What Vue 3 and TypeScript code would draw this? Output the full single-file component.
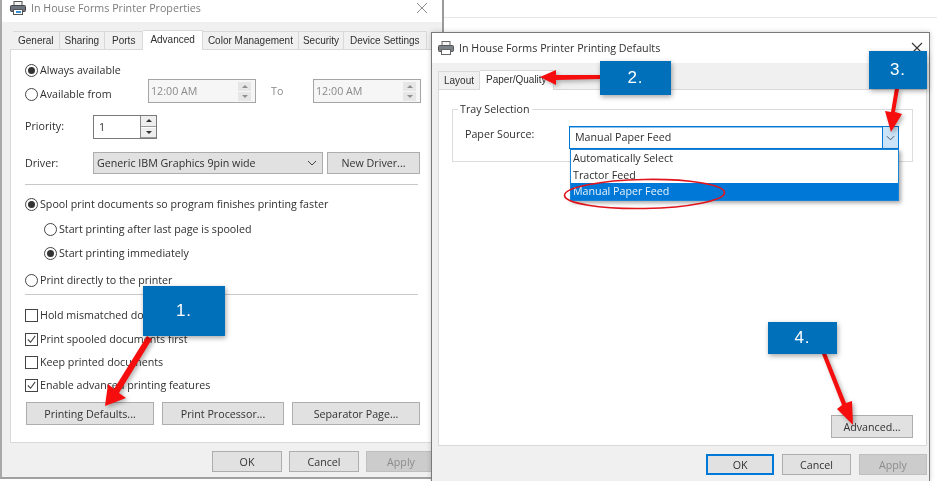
<script setup lang="ts">
const tabs = ['General', 'Sharing', 'Ports', 'Advanced', 'Color Management', 'Security', 'Device Settings']
const lowerButtons = ['Printing Defaults...', 'Print Processor...', 'Separator Page...']
const times = [0, 1]
const paperOptions = ['Automatically Select', 'Tractor Feed', 'Manual Paper Feed']
const callouts = [
  { id: 'one', label: '1.' },
  { id: 'two', label: '2.' },
  { id: 'three', label: '3.' },
  { id: 'four', label: '4.' },
]
</script>

<template>
  <div class="desk">
    <div class="backdrop"></div>

    <section class="window first">
      <header class="title dim">
        <svg class="printer" viewBox="0 0 16 14" width="16" height="14">
          <rect x="4" y="0.5" width="8" height="4" fill="#f4f4f4" stroke="#555" />
          <rect x="0.5" y="4.5" width="15" height="6" rx="1" fill="#6d7680" stroke="#444" />
          <rect x="3.5" y="8.5" width="9" height="5" fill="#fff" stroke="#555" />
          <rect x="6" y="10" width="5" height="2" fill="#3b8fd0" />
        </svg>
        <span>In House Forms Printer Properties</span>
        <svg class="close" viewBox="0 0 12 12" width="12" height="12">
          <path d="M1 1 11 11M11 1 1 11" stroke="#8c8c8c" fill="none" />
        </svg>
      </header>

      <div class="body first-body">
        <nav class="tabs first-tabs">
          <span v-for="tab in tabs" :key="tab" class="tab" :class="{ active: tab === 'Advanced' }">{{ tab }}</span>
        </nav>

        <div class="page first-page">
          <div class="avail">
            <div class="avail-labels">
              <label class="opt"><i class="radio on"></i>Always available</label>
              <label class="opt"><i class="radio"></i>Available from</label>
            </div>
            <div class="times">
              <template v-for="t in times" :key="t">
                <span v-if="t === 1" class="to">To</span>
                <div class="time">
                  <span>12:00 AM</span>
                  <span class="spin faint"><i class="up"></i><i class="down"></i></span>
                </div>
              </template>
            </div>
          </div>

          <div class="priority">
            <span class="field-label">Priority:</span>
            <div class="number">
              <span>1</span>
              <span class="spin boxed"><i class="up"></i><i class="down"></i></span>
            </div>
          </div>

          <div class="driver">
            <span class="field-label">Driver:</span>
            <div class="select">
              <span>Generic IBM Graphics 9pin wide</span>
              <svg viewBox="0 0 10 6" width="10" height="6"><path d="M1 1 5 5 9 1" fill="none" stroke="#444" /></svg>
            </div>
            <button class="btn new-driver">New Driver...</button>
          </div>

          <hr class="rule rule-a" />

          <label class="opt"><i class="radio on"></i>Spool print documents so program finishes printing faster</label>
          <label class="opt sub gap1"><i class="radio"></i>Start printing after last page is spooled</label>
          <label class="opt sub"><i class="radio on"></i>Start printing immediately</label>
          <label class="opt gap3"><i class="radio"></i>Print directly to the printer</label>

          <hr class="rule rule-b" />

          <label class="opt gap8"><i class="check"></i>Hold mismatched documents</label>
          <label class="opt"><i class="check">
            <svg viewBox="0 0 12 12" width="11" height="11"><path d="M2 6 5 9 10 2" fill="none" stroke="#444" stroke-width="1.2" /></svg>
          </i>Print spooled documents first</label>
          <label class="opt back1"><i class="check"></i>Keep printed documents</label>
          <label class="opt back1"><i class="check">
            <svg viewBox="0 0 12 12" width="11" height="11"><path d="M2 6 5 9 10 2" fill="none" stroke="#444" stroke-width="1.2" /></svg>
          </i>Enable advanced printing features</label>

          <div class="lower">
            <button v-for="b in lowerButtons" :key="b" class="btn">{{ b }}</button>
          </div>
        </div>

        <footer class="actions first-actions">
          <button class="btn">OK</button>
          <button class="btn">Cancel</button>
          <button class="btn off">Apply</button>
        </footer>
      </div>
    </section>

    <section class="window second">
      <header class="title tall">
        <svg class="printer" viewBox="0 0 16 14" width="16" height="14">
          <rect x="4" y="0.5" width="8" height="4" fill="#f4f4f4" stroke="#666" />
          <rect x="0.5" y="4.5" width="15" height="6" rx="1" fill="#7b828a" stroke="#555" />
          <rect x="3.5" y="8.5" width="9" height="5" fill="#fff" stroke="#666" />
        </svg>
        <span>In House Forms Printer Printing Defaults</span>
        <svg class="close" viewBox="0 0 12 12" width="12" height="12">
          <path d="M1 1 11 11M11 1 1 11" stroke="#333" fill="none" stroke-width="1.1" />
        </svg>
      </header>

      <div class="body second-body">
        <nav class="tabs second-tabs">
          <span class="tab">Layout</span>
          <span class="tab active">Paper/Quality</span>
        </nav>

        <div class="page second-page">
          <fieldset class="tray">
            <legend>Tray Selection</legend>
            <div class="source">
              <span class="source-label">Paper Source:</span>
              <div class="combo-wrap">
                <div class="combo">
                  <span>Manual Paper Feed</span>
                  <span class="combo-btn">
                    <svg viewBox="0 0 10 6" width="9" height="6"><path d="M1 1 5 5 9 1" fill="none" stroke="#445" /></svg>
                  </span>
                </div>
                <ul class="list">
                  <li v-for="p in paperOptions" :key="p" :class="{ picked: p === 'Manual Paper Feed' }">{{ p }}</li>
                </ul>
              </div>
            </div>
          </fieldset>
          <button class="btn advanced">Advanced...</button>
        </div>

        <footer class="actions second-actions">
          <button class="btn default">OK</button>
          <button class="btn">Cancel</button>
          <button class="btn off">Apply</button>
        </footer>
      </div>
    </section>

    <svg class="marks" viewBox="0 0 937 481" width="937" height="481">
      <ellipse cx="644.5" cy="194" rx="80" ry="14.5" fill="none" stroke="#e0141c" stroke-width="1.6" transform="rotate(-1 644 194)" />
      <g class="arrows" fill="#f60d0d">
        <polygon points="147,336 152,339 119,393 126,398 105,406 108,384 114,389" />
        <polygon points="600,75 600,79 556,80 556,85 540,77 556,70 556,75" />
        <polygon points="895,88 899,89 895,112 902,114 891,132 885,111 891,112" />
        <polygon points="822,354 826,353 846,403 852,401 853,425 837,409 842,405" />
      </g>
    </svg>

    <div v-for="c in callouts" :key="c.id" class="callout" :class="c.id">{{ c.label }}</div>
  </div>
</template>

<style>
html, body { margin: 0; background: #fff; overflow: hidden; }
</style>

<style scoped>
.desk {
  position: relative;
  width: 937px;
  height: 481px;
  overflow: hidden;
  background: #fff;
  font-family: "Open Sans", "Noto Sans", sans-serif;
  font-size: 10.7px;
  color: #2f2f2f;
  filter: blur(0.35px);
}
.backdrop {
  position: absolute;
  left: 442px;
  top: 17px;
  right: 0;
  height: 0;
  border-top: 1px solid #e6e6e6;
}
.window { position: absolute; box-sizing: border-box; display: flex; flex-direction: column; }
.first {
  left: 0; top: 0; width: 444px; height: 479px;
  border-left: 2px solid #a8a8a8;
  border-right: 2px solid #9a9a9a;
  border-bottom: 2px solid #a0a0a0;
  background: #f0f0f0;
}
.second {
  left: 431px; top: 32px; width: 499px; height: 449px;
  border: 1px solid #7a7a7a;
  border-bottom: 0;
  background: #f0f0f0;
  box-shadow: 0 0 5px rgba(0, 0, 0, .2);
}
.title {
  height: 22px;
  flex: none;
  display: flex;
  align-items: center;
  gap: 5px;
  background: #fff;
  padding: 0 12px 6px 8px;
  box-sizing: border-box;
}
.title .close { margin-left: auto; }
.dim { color: #7b7b7b; }
.dim .close { margin-right: 2px; }
.tall { height: 30px; padding: 0 6px 0 6px; gap: 4px; }
.tall .printer { margin-right: 1px; }
.body { flex: 1; display: flex; flex-direction: column; }
.first-body { padding: 8px 0 0 8px; }
.second-body { padding: 6px 2px 0 6px; }
.tabs { display: flex; align-items: flex-end; height: 19px; padding-left: 3px; }
.tab {
  box-sizing: border-box;
  height: 18px;
  line-height: 17px;
  padding: 0 5px;
  border: 1px solid #d9d9d9;
  border-bottom: 0;
  border-left-width: 0;
  background: #f0f0f0;
  white-space: nowrap;
  font-family: "Liberation Sans", Arial, sans-serif;
  font-size: 10px;
}
.first-tabs .tab:nth-child(3) { padding: 0 7px; }
.first-tabs .tab:nth-child(6) { padding: 0 4px; }
.first-tabs .tab:nth-child(7) { padding: 0 6px; }
.tab.active { height: 20px; line-height: 17px; background: #fff; padding: 0 7px; position: relative; top: 1px; }
.page { background: #fff; border: 1px solid #d9d9d9; box-sizing: border-box; }
.first-page { height: 394px; padding: 8px 0 0 14px; width: 432px; }
.second-page { height: 357px; padding: 14px 13px 0 13px; display: flex; flex-direction: column; }
.avail { display: flex; height: 48px; }
.avail-labels { width: 123px; flex: none; }
.opt { display: flex; align-items: center; height: 24px; gap: 2px; white-space: nowrap; }
.sub { padding-left: 19px; }
.gap1 { margin-top: 1px; }
.gap3 { margin-top: 3px; }
.gap8 { margin-top: 8px; }
.back1 { margin-top: -1px; }
.radio {
  width: 11px; height: 11px; flex: none;
  border: 1px solid #444; border-radius: 50%;
  background: #fff; position: relative;
}
.radio.on::after {
  content: ""; position: absolute; left: 2px; top: 2px;
  width: 7px; height: 7px; border-radius: 50%; background: #333;
}
.check {
  width: 11px; height: 11px; flex: none;
  border: 1px solid #444; background: #fff;
  display: flex; align-items: center; justify-content: center;
}
.times { display: flex; align-items: flex-start; padding-top: 21px; color: #8a8a8a; }
.time {
  box-sizing: border-box; width: 108px; height: 24px;
  border: 1px solid #a5a5a5; background: #f6f6f6;
  display: flex; align-items: center; justify-content: space-between;
  padding-left: 2px;
}
.to { width: 57px; box-sizing: border-box; padding-left: 15px; line-height: 24px; }
.spin { display: flex; flex-direction: column; gap: 1px; width: 15px; align-self: stretch; justify-content: center; align-items: center; }
.spin i { display: flex; width: 13px; height: 9px; align-items: center; justify-content: center; background: #e6e6e6; }
.spin .up::after, .spin .down::after { content: ""; border: 3px solid transparent; }
.spin .up::after { border-bottom-color: #333; border-top-width: 0; }
.spin .down::after { border-top-color: #333; border-bottom-width: 0; }
.spin.faint { margin-right: 3px; }
.spin.faint .up::after { border-bottom-color: #8f8f8f; }
.spin.faint .down::after { border-top-color: #8f8f8f; }
.priority { display: flex; align-items: center; margin-top: 9px; height: 24px; }
.field-label { width: 68px; flex: none; }
.priority .field-label { padding-bottom: 2px; }
.number {
  box-sizing: border-box; width: 64px; height: 24px;
  border: 1px solid #7a7a7a; display: flex; align-items: center; justify-content: space-between;
  padding-left: 5px;
}
.spin.boxed { border-left: 1px solid #888; width: 15px; }
.spin.boxed i { height: 10px; border-bottom: 1px solid #999; background: #eee; width: 15px; }
.driver { display: flex; align-items: center; margin-top: 13px; height: 22px; }
.select {
  box-sizing: border-box; width: 230px; height: 22px;
  background: #e1e1e1; border: 1px solid #adadad;
  display: flex; align-items: center; justify-content: space-between;
  padding: 0 5px 0 3px;
}
.btn {
  box-sizing: border-box;
  font: inherit; color: #333;
  background: #e1e1e1;
  border: 1px solid #adadad;
  padding: 0;
  display: block;
}
.new-driver { width: 93px; height: 22px; margin-left: 4px; }
.rule { border: 0; border-top: 1px solid #c8c8c8; margin: 0; width: 393px; }
.rule-a { margin-top: 10px; margin-bottom: 7px; }
.rule-b { margin-top: 2px; }
.lower { display: flex; gap: 8px; margin: 5px 0 0 1px; }
.lower .btn { height: 23px; }
.lower .btn:nth-child(1) { width: 128px; }
.lower .btn:nth-child(2) { width: 122px; }
.lower .btn:nth-child(3) { width: 128px; }
.actions { display: flex; gap: 7px; }
.actions .btn { width: 70px; height: 21px; }
.first-actions { margin: 8px 0 0 202px; }
.second-actions { margin: 8px 0 0 268px; gap: 8px; }
.second-actions .btn { width: 69px; }
.off { background: #cccccc; border-color: #bfbfbf; color: #8c8c8c; }
.default { border: 2px solid #0078d7; }
.second-tabs { height: 20px; padding-left: 0; }
.second-tabs .tab { border-left-width: 1px; padding: 0 5px; }
.second-tabs .tab.active { border-left-width: 0; padding: 0 6px; }
.tray {
  margin: 0; box-sizing: border-box; height: 58px; padding: 0;
  border: 1px solid #dcdcdc; position: relative;
}
.tray legend { padding: 0 2px; margin-left: 5px; line-height: 10px; }
.source { display: flex; align-items: flex-start; padding: 12px 0 0 12px; }
.source-label { width: 104px; flex: none; line-height: 16px; }
.combo-wrap { width: 330px; position: relative; }
.combo {
  box-sizing: border-box; height: 23px;
  border: 1px solid #0078d7; background: #fff;
  box-shadow: inset 0 1px 0 #8fc3ee;
  display: flex; align-items: center; justify-content: space-between;
  padding-left: 5px;
  line-height: 19px;
}
.combo > span:first-child { padding-bottom: 1px; }
.combo-btn {
  box-sizing: border-box; width: 16px; align-self: stretch;
  background: #cce4f7; border-left: 1px solid #0078d7;
  display: flex; align-items: center; justify-content: center;
}
.list {
  list-style: none; margin: 0; padding: 0;
  position: absolute; left: 1px; right: 0; top: 23px;
  background: #fff; border: 1px solid #1784d8; border-top-color: #1784d8;
  box-shadow: 2px 2px 4px rgba(0, 0, 0, .35);
  z-index: 2;
  box-sizing: border-box;
}
.list li { height: 16.5px; line-height: 16px; padding-left: 2px; }
.list .picked { background: #0078d7; color: #e6f2fb; }
.advanced { width: 82px; height: 23px; align-self: flex-end; margin-top: auto; margin-bottom: 7px; }
.marks { position: absolute; left: 0; top: 0; pointer-events: none; z-index: 3; }
.arrows { filter: drop-shadow(2px 2px 2px rgba(0, 0, 0, .3)); }
.callout {
  position: absolute; z-index: 4;
  display: flex; align-items: center; justify-content: center;
  background: #0070bb; color: #fff;
  font-family: "Liberation Sans", Arial, sans-serif;
  font-size: 17px;
  letter-spacing: 1px;
  box-shadow: 1px 2px 5px rgba(0, 0, 0, .35);
}
.one { left: 143px; top: 286px; width: 82px; height: 50px; }
.two { left: 600px; top: 61px; width: 71px; height: 34px; }
.three { left: 869px; top: 51px; width: 58px; height: 38px; }
.four { left: 768px; top: 322px; width: 69px; height: 32px; }
</style>
